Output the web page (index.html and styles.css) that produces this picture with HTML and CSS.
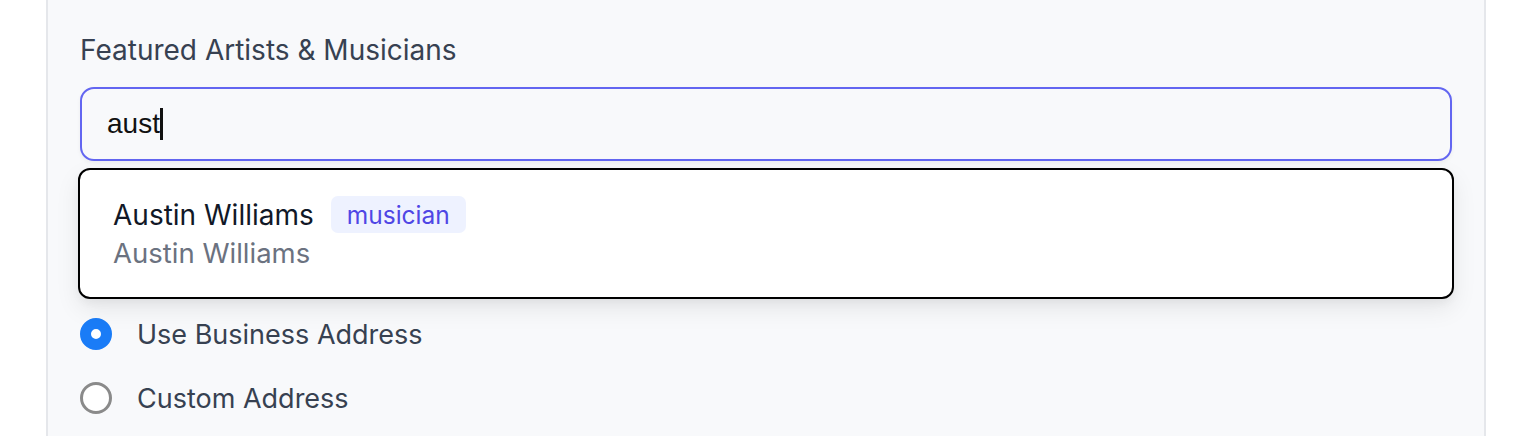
FILE: index.html
```html
<!DOCTYPE html>
<html lang="en">
<head>
<meta charset="utf-8">
<title>Featured Artists</title>
<link rel="stylesheet" href="styles.css">
</head>
<body>
<div class="panel">
  <div class="field">
    <label class="field-label">Featured Artists &amp; Musicians</label>
    <div class="combo">
      <div class="input"><span class="input-text">aust</span><span class="caret"></span></div>
      <div class="dropdown">
        <div class="option">
          <div class="option-title">
            <span class="option-name">Austin Williams</span>
            <span class="badge">musician</span>
          </div>
          <div class="option-sub">Austin Williams</div>
        </div>
      </div>
    </div>
  </div>
  <div class="radios">
    <div class="radio-row">
      <span class="radio radio-checked"></span>
      <span class="radio-label">Use Business Address</span>
    </div>
    <div class="radio-row">
      <span class="radio"></span>
      <span class="radio-label">Custom Address</span>
    </div>
  </div>
</div>
</body>
</html>
```
FILE: styles.css
```css
* { box-sizing: border-box; }
html, body { margin: 0; padding: 0; background: #ffffff; }
body {
  font-family: Inter, "Noto Sans", sans-serif;
  height: 436px;
  overflow: hidden;
}
.panel {
  margin-left: 46px;
  width: 1440px;
  height: 436px;
  background: #f8f9fb;
  border-left: 2px solid #e5e7eb;
  border-right: 2px solid #e5e7eb;
  padding: 33px 32px 0 32px;
}
.field-label {
  display: block;
  font-size: 28px;
  line-height: 34px;
  color: #374151;
  font-weight: 400;
}
.combo {
  position: relative;
  margin-top: 20px;
}
.input {
  height: 74px;
  border: 2px solid #6366f1;
  border-radius: 14px;
  background: #f8f9fb;
  display: flex;
  align-items: center;
  padding-left: 25px;
  box-shadow: 0 2px 4px rgba(0,0,0,0.05);
}
.input-text {
  font-family: "Liberation Sans", Arial, sans-serif;
  font-size: 28px;
  color: #111111;
}
.caret {
  width: 3px;
  height: 32px;
  background: #111;
  margin-left: 0;
}
.dropdown {
  position: absolute;
  left: -2px;
  right: -2px;
  top: 81px;
  height: 131px;
  background: #ffffff;
  border: 2px solid #000000;
  border-radius: 12px;
  box-shadow: 0 10px 24px rgba(0,0,0,0.08), 0 4px 8px rgba(0,0,0,0.04);
  z-index: 2;
}
.option {
  padding: 26px 33px 24px 33px;
}
.option-title {
  display: flex;
  align-items: center;
  gap: 17px;
}
.option-name {
  font-size: 28px;
  font-weight: 400;
  color: #111827;
}
.badge {
  background: #eef2ff;
  color: #4f46e5;
  font-size: 24.5px;
  font-weight: 400;
  border-radius: 7px;
  padding: 0 16px;
  height: 37px;
  display: inline-flex;
  align-items: center;
}
.option-sub {
  margin-top: 3px;
  font-size: 27.5px;
  color: #6b7280;
}
.radios {
  margin-top: 157px;
  display: flex;
  flex-direction: column;
  gap: 32px;
}
.radio-row {
  display: flex;
  align-items: center;
  gap: 25px;
  height: 32px;
}
.radio {
  width: 32px;
  height: 32px;
  border-radius: 50%;
  border: 3px solid #8a8a8a;
  background: #ffffff;
  flex: none;
}
.radio-checked {
  border: 11px solid #1a7cf7;
  background: #ffffff;
}
.radio-label {
  font-size: 27px;
  color: #374151;
}
```
